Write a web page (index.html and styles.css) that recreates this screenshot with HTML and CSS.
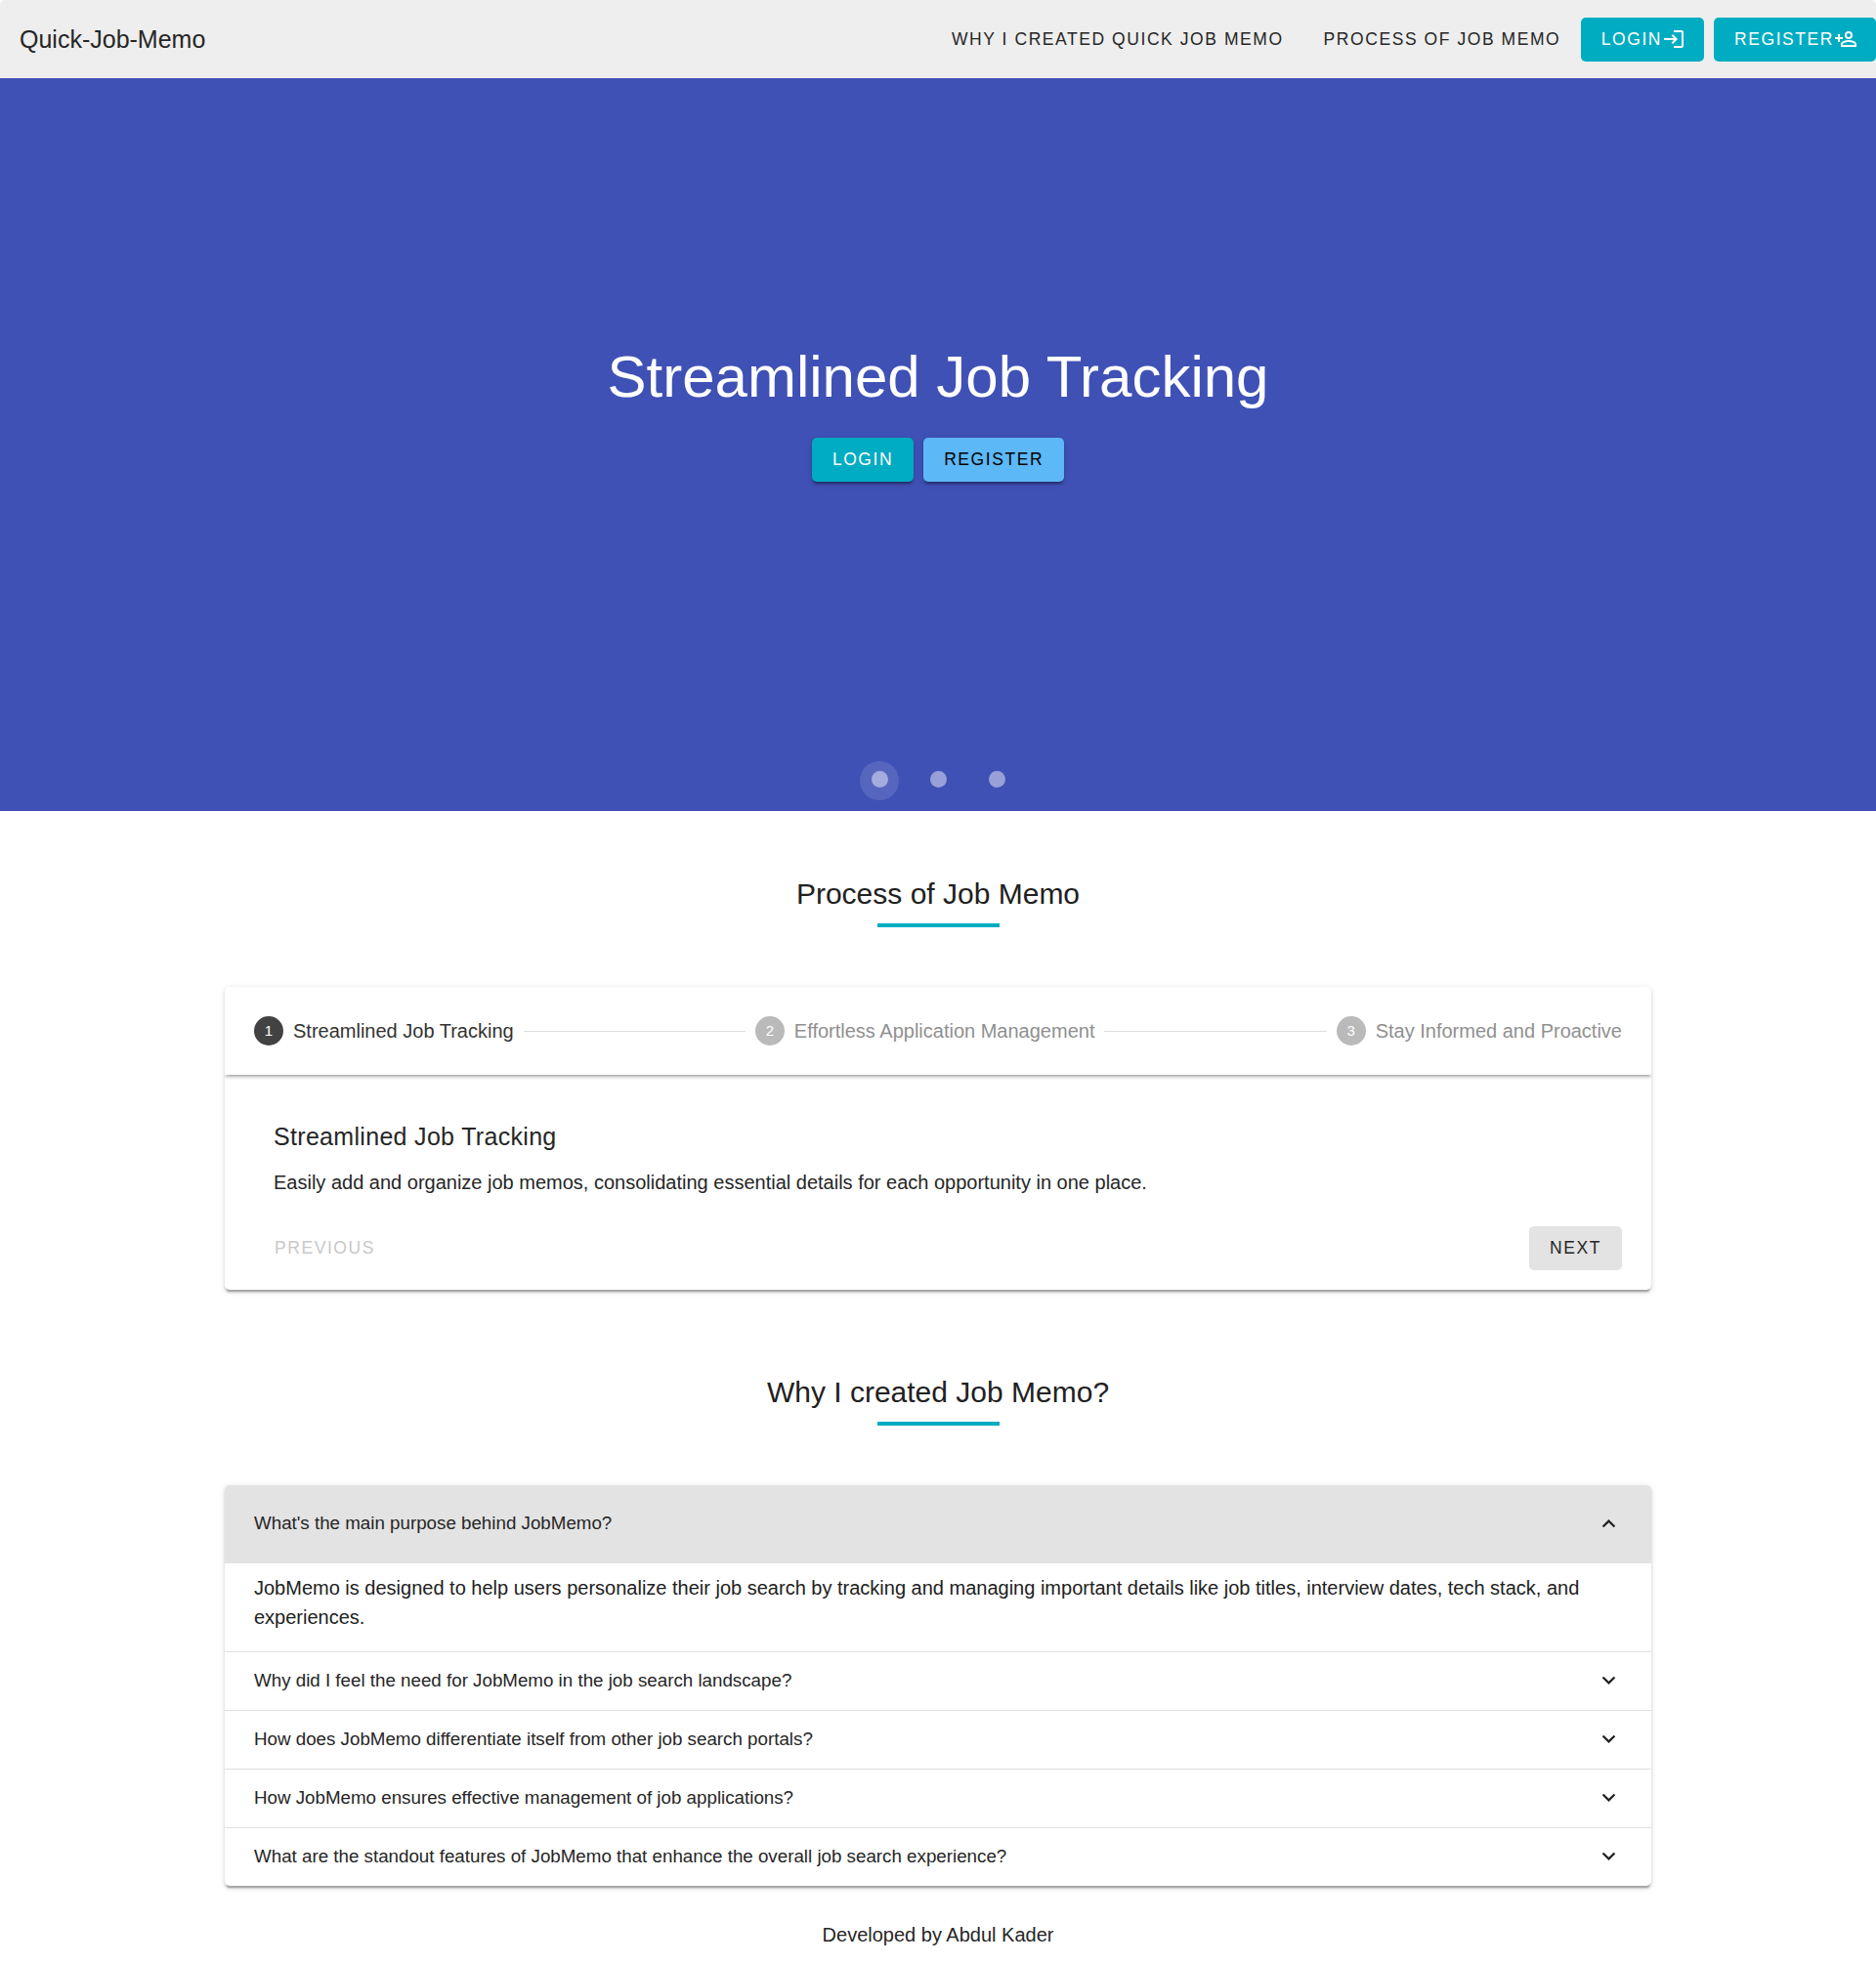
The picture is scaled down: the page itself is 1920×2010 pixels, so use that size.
FILE: index.html
```html
<!DOCTYPE html>
<html lang="en">
<head>
<meta charset="utf-8">
<title>Quick-Job-Memo</title>
<link rel="stylesheet" href="styles.css">
</head>
<body>
<div class="app">
  <header class="app-bar">
    <div class="brand">Quick-Job-Memo</div>
    <nav class="nav">
      <a class="btn nav-link">Why I created Quick Job Memo</a>
      <a class="btn nav-link">Process of Job Memo</a>
      <a class="btn btn-teal nav-action">Login<svg class="icon" viewBox="0 0 24 24"><path d="M11 7L9.6 8.4L12.2 11H2V13H12.2L9.6 15.6L11 17L16 12L11 7M20 19H12V21H20C21.1 21 22 20.1 22 19V5C22 3.9 21.1 3 20 3H12V5H20V19Z"/></svg></a>
      <a class="btn btn-teal nav-action">Register<svg class="icon" viewBox="0 0 24 24"><path d="M15,4A4,4 0 0,0 11,8A4,4 0 0,0 15,12A4,4 0 0,0 19,8A4,4 0 0,0 15,4M15,5.9C16.16,5.9 17.1,6.84 17.1,8C17.1,9.16 16.16,10.1 15,10.1A2.1,2.1 0 0,1 12.9,8A2.1,2.1 0 0,1 15,5.9M4,7V10H1V12H4V15H6V12H9V10H6V7H4M15,13C12.33,13 7,14.33 7,17V20H23V17C23,14.33 17.67,13 15,13M15,14.9C17.97,14.9 21.1,16.36 21.1,17V18.1H8.9V17C8.9,16.36 12,14.9 15,14.9Z"/></svg></a>
    </nav>
  </header>

  <section class="hero">
    <div class="hero-content">
      <h1 class="hero-title">Streamlined Job Tracking</h1>
      <div class="hero-actions">
        <a class="btn btn-teal raised">Login</a>
        <a class="btn btn-blue raised">Register</a>
      </div>
    </div>
    <div class="dots">
      <span class="dot dot-active"></span>
      <span class="dot"></span>
      <span class="dot"></span>
    </div>
  </section>

  <section class="section">
    <h2 class="section-title">Process of Job Memo</h2>
    <div class="card">
      <div class="steps">
        <div class="step step-active"><span class="step-number">1</span><span class="step-label">Streamlined Job Tracking</span></div>
        <hr class="step-line">
        <div class="step"><span class="step-number">2</span><span class="step-label">Effortless Application Management</span></div>
        <hr class="step-line">
        <div class="step"><span class="step-number">3</span><span class="step-label">Stay Informed and Proactive</span></div>
      </div>
      <div class="step-body">
        <h3 class="step-title">Streamlined Job Tracking</h3>
        <p class="step-text">Easily add and organize job memos, consolidating essential details for each opportunity in one place.</p>
      </div>
      <div class="step-actions">
        <a class="btn btn-disabled">Previous</a>
        <a class="btn btn-gray">Next</a>
      </div>
    </div>
  </section>

  <section class="section section-why">
    <h2 class="section-title">Why I created Job Memo?</h2>
    <div class="card">
      <div class="faq faq-open"><span>What's the main purpose behind JobMemo?</span><svg class="chevron" viewBox="0 0 24 24"><path d="M7.41,15.41L12,10.83L16.59,15.41L18,14L12,8L6,14L7.41,15.41Z"/></svg></div>
      <p class="faq-answer">JobMemo is designed to help users personalize their job search by tracking and managing important details like job titles, interview dates, tech stack, and experiences.</p>
      <div class="faq"><span>Why did I feel the need for JobMemo in the job search landscape?</span><svg class="chevron" viewBox="0 0 24 24"><path d="M7.41,8.58L12,13.17L16.59,8.58L18,10L12,16L6,10L7.41,8.58Z"/></svg></div>
      <div class="faq"><span>How does JobMemo differentiate itself from other job search portals?</span><svg class="chevron" viewBox="0 0 24 24"><path d="M7.41,8.58L12,13.17L16.59,8.58L18,10L12,16L6,10L7.41,8.58Z"/></svg></div>
      <div class="faq"><span>How JobMemo ensures effective management of job applications?</span><svg class="chevron" viewBox="0 0 24 24"><path d="M7.41,8.58L12,13.17L16.59,8.58L18,10L12,16L6,10L7.41,8.58Z"/></svg></div>
      <div class="faq"><span>What are the standout features of JobMemo that enhance the overall job search experience?</span><svg class="chevron" viewBox="0 0 24 24"><path d="M7.41,8.58L12,13.17L16.59,8.58L18,10L12,16L6,10L7.41,8.58Z"/></svg></div>
    </div>
  </section>

  <footer class="footer">Developed by Abdul Kader</footer>
</div>
</body>
</html>
```
FILE: styles.css
```css
* { box-sizing: border-box; }
html { background: #fff; }
body {
  margin: 0;
  font-family: "Liberation Sans", Arial, sans-serif;
  font-size: 20px;
  line-height: 30px;
  color: #262626;
}
h1, h2, h3, p { margin: 0; font-weight: 400; }

.app { height: 2010px; overflow: hidden; border-radius: 5px; background: #fff; }

.app-bar {
  display: flex;
  align-items: center;
  justify-content: space-between;
  height: 80px;
  padding-left: 20px;
  background: #eee;
}
.brand { font-size: 25px; letter-spacing: 0; }
.nav { display: flex; align-items: center; }

.btn {
  display: inline-flex;
  align-items: center;
  justify-content: center;
  height: 45px;
  padding: 0 21px 1px;
  border-radius: 5px;
  font-size: 17.5px;
  letter-spacing: 0.0892857143em;
  text-transform: uppercase;
  white-space: nowrap;
}
.nav-link { padding: 0 20.5px; }
.btn-teal { background: #00acc1; color: #fff; }
.btn-blue { background: #5cb8f7; color: #000; }
.btn-gray { background: #e3e3e3; }
.btn-disabled { color: #c8c8c8; }
.nav-action { padding-bottom: 0; }
.nav-action + .nav-action { margin-left: 10px; }
.icon { width: 24px; height: 24px; margin-right: -2px; fill: currentColor; }
.raised {
  box-shadow: 0 3.75px 1.25px -2.5px rgba(0,0,0,.2), 0 2.5px 2.5px rgba(0,0,0,.14), 0 1.25px 6.25px rgba(0,0,0,.12);
}

.hero {
  display: grid;
  grid-template-rows: 1fr 62px;
  height: 750px;
  background: #3f51b5;
}
.hero-content { padding-top: 268px; text-align: center; }
.hero-title { font-size: 60px; line-height: 75px; color: #fff; }
.hero-actions { display: flex; justify-content: center; gap: 10px; margin-top: 25px; }
.dots { display: flex; align-items: center; justify-content: center; gap: 20px; }
.dot {
  display: grid;
  place-items: center;
  width: 40px;
  height: 40px;
  border-radius: 50%;
}
.dot::before {
  content: "";
  width: 17px;
  height: 17px;
  margin-bottom: 3px;
  border-radius: 50%;
  background: rgba(255,255,255,.46);
}
.dot-active { background: rgba(255,255,255,.12); }

.section { width: 1460px; margin: 65px auto 0; }
.section-why { margin-top: 85px; }
.section-title {
  display: flex;
  flex-direction: column;
  align-items: center;
  gap: 10px;
  height: 115px;
  font-size: 30px;
  line-height: 40px;
  color: #212121;
}
.section-title::after { content: ""; width: 125px; height: 4px; background: #00acc1; }

.card {
  border-radius: 5px;
  overflow: hidden;
  background: #fff;
  box-shadow: 0 3.75px 1.25px -2.5px rgba(0,0,0,.2), 0 2.5px 2.5px rgba(0,0,0,.14), 0 1.25px 6.25px rgba(0,0,0,.12);
}
.steps {
  display: flex;
  align-items: center;
  gap: 10px;
  height: 90px;
  padding: 0 30px;
  box-shadow: 0 3.75px 1.25px -2.5px rgba(0,0,0,.2), 0 2.5px 2.5px rgba(0,0,0,.14), 0 1.25px 6.25px rgba(0,0,0,.12);
}
.step { display: flex; align-items: center; gap: 10px; color: #909090; white-space: nowrap; }
.step-active { color: #323232; }
.step-number {
  width: 30px;
  height: 30px;
  border-radius: 50%;
  background: #bababa;
  color: #fff;
  font-size: 15px;
  text-align: center;
}
.step-active .step-number { background: #424242; }
.step-line { flex: 1; margin: 0; border: 0; border-top: 1px solid #e0e0e0; }
.step-body { padding: 43px 50px 0; }
.step-title { font-size: 25px; line-height: 40px; letter-spacing: 0.0125em; }
.step-text { margin-top: 12px; line-height: 30px; }
.step-actions { display: flex; justify-content: space-between; padding: 30px 30px 20px; }

.faq {
  display: flex;
  align-items: center;
  justify-content: space-between;
  height: 60px;
  padding: 0 30px 2px;
  border-top: 1px solid #e0e0e0;
  font-size: 18.75px;
  line-height: 20px;
}
.faq-open { height: 80px; border-top: 0; background: #e3e3e3; }
.chevron { width: 27px; height: 27px; fill: #212121; }
.faq-answer { height: 90px; padding: 10px 30px 20px; color: #212121; }

.footer { margin-top: 35px; text-align: center; }
```
